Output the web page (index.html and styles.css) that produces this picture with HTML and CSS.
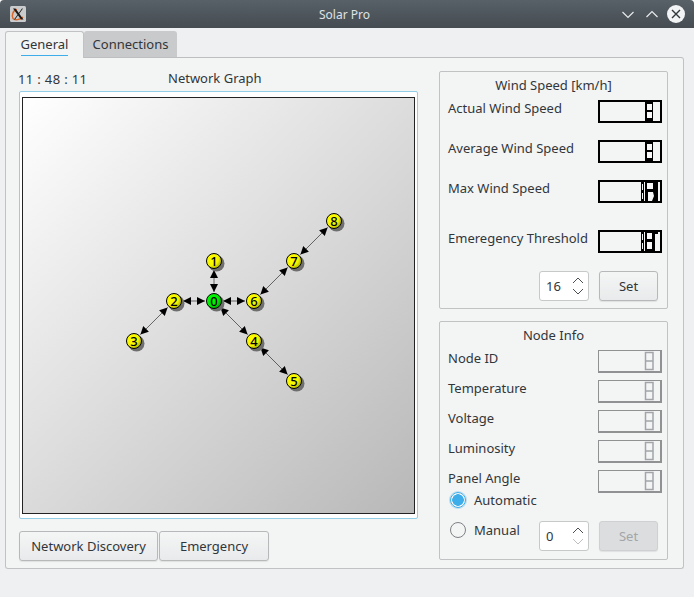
FILE: index.html
```html
<!DOCTYPE html>
<html lang="en">
<head>
  <meta charset="UTF-8">
  <title>Solar Pro</title>
  <link rel="stylesheet" href="styles.css">
</head>
<body>
  <div id="window">
    <div id="titlebar">
      <svg class="app-icon" width="16" height="16" viewBox="0 0 16 16">
        <rect x="0" y="0" width="16" height="16" rx="1.5" fill="#c9cbcc"/>
        <path d="M7 3.5C3 4 1.5 9 3 12.5C4.5 14.5 10 14 13 11" fill="none" stroke="#d9662a" stroke-width="1.4"/>
        <path d="M3 2.5L5.5 2.5L13.5 13.5L11 13.5Z M12 2.5L13 2.5L5 13.5L4 13.5Z" fill="#1b1b1b"/>
      </svg>
      <div class="title">Solar Pro</div>
      <svg class="win-buttons" width="70" height="20" viewBox="0 0 70 20">
        <path d="M0.5 8L6 13.500L11.500 8" fill="none" stroke="#e8eaeb" stroke-width="1.2"/>
        <path d="M24.500 13L30 7.500L35.500 13" fill="none" stroke="#e8eaeb" stroke-width="1.2"/>
        <circle cx="54" cy="10" r="9" fill="#f2f3f4"/>
        <path d="M50 6L58 14M58 6L50 14" fill="none" stroke="#31363b" stroke-width="1.4"/>
      </svg>
    </div>

    <div id="content">
      <div class="tabs">
        <div class="tab active"><span>General</span></div>
        <div class="tab">Connections</div>
      </div>

      <div class="pane">
        <div class="left">
          <div class="graph-head">
            <div class="clock">11 : 48 : 11</div>
            <div class="graph-title">Network Graph</div>
          </div>
          <div class="graph-frame">
            <div class="canvas">
              <svg class="graph" viewBox="23 98 391 415">
                <defs>
                  <marker id="head" markerUnits="userSpaceOnUse" markerWidth="8" markerHeight="8" refX="8" refY="4" orient="auto-start-reverse">
                    <path d="M0 0L8 4L0 8Z" fill="#000"/>
                  </marker>
                  <radialGradient id="yellow" cx="0.35" cy="0.35" r="0.8">
                    <stop offset="0" stop-color="#ffff00"/>
                    <stop offset="0.55" stop-color="#f4f400"/>
                    <stop offset="1" stop-color="#8f8f00"/>
                  </radialGradient>
                  <radialGradient id="green" cx="0.35" cy="0.35" r="0.8">
                    <stop offset="0" stop-color="#00ff00"/>
                    <stop offset="0.55" stop-color="#00ea00"/>
                    <stop offset="1" stop-color="#008a00"/>
                  </radialGradient>
                </defs>
                <g class="edges">
                  <line x1="214" y1="292" x2="214" y2="270" marker-start="url(#head)" marker-end="url(#head)"/>
                  <line x1="205" y1="301" x2="183" y2="301" marker-start="url(#head)" marker-end="url(#head)"/>
                  <line x1="223" y1="301" x2="245" y2="301" marker-start="url(#head)" marker-end="url(#head)"/>
                  <line x1="220.4" y1="307.4" x2="247.6" y2="334.6" marker-start="url(#head)" marker-end="url(#head)"/>
                  <line x1="167.6" y1="307.4" x2="140.4" y2="334.6" marker-start="url(#head)" marker-end="url(#head)"/>
                  <line x1="260.4" y1="347.4" x2="287.6" y2="374.6" marker-start="url(#head)" marker-end="url(#head)"/>
                  <line x1="260.4" y1="294.6" x2="287.6" y2="267.4" marker-start="url(#head)" marker-end="url(#head)"/>
                  <line x1="300.4" y1="254.6" x2="327.6" y2="227.4" marker-start="url(#head)" marker-end="url(#head)"/>
                </g>
                <g class="shadows">
                  <circle cx="216.5" cy="303.5" r="8"/><circle cx="216.5" cy="263.5" r="8"/>
                  <circle cx="176.5" cy="303.5" r="8"/><circle cx="136.5" cy="343.5" r="8"/>
                  <circle cx="256.5" cy="343.5" r="8"/><circle cx="296.5" cy="383.5" r="8"/>
                  <circle cx="256.5" cy="303.5" r="8"/><circle cx="296.5" cy="263.5" r="8"/>
                  <circle cx="336.5" cy="223.5" r="8"/>
                </g>
                <g class="nodes">
                  <circle cx="214" cy="301" r="7.5" fill="url(#green)"/>
                  <circle cx="214" cy="261" r="7.5" fill="url(#yellow)"/>
                  <circle cx="174" cy="301" r="7.5" fill="url(#yellow)"/>
                  <circle cx="134" cy="341" r="7.5" fill="url(#yellow)"/>
                  <circle cx="254" cy="341" r="7.5" fill="url(#yellow)"/>
                  <circle cx="294" cy="381" r="7.5" fill="url(#yellow)"/>
                  <circle cx="254" cy="301" r="7.5" fill="url(#yellow)"/>
                  <circle cx="294" cy="261" r="7.5" fill="url(#yellow)"/>
                  <circle cx="334" cy="221" r="7.5" fill="url(#yellow)"/>
                </g>
                <g class="labels">
                  <text x="214" y="306">0</text>
                  <text x="214" y="266">1</text>
                  <text x="174" y="306">2</text>
                  <text x="134" y="346">3</text>
                  <text x="254" y="346">4</text>
                  <text x="294" y="386">5</text>
                  <text x="254" y="306">6</text>
                  <text x="294" y="266">7</text>
                  <text x="334" y="226">8</text>
                </g>
              </svg>
            </div>
          </div>
          <div class="graph-buttons">
            <button class="btn discovery">Network Discovery</button>
            <button class="btn emergency">Emergency</button>
          </div>
        </div>

        <div class="right">
          <div class="group wind">
            <div class="group-title">Wind Speed [km/h]</div>
            <div class="row"><span class="label">Actual Wind Speed</span>
              <div class="lcd"><svg width="60" height="19" viewBox="0 0 60 19"><path class="seg" d="M45 0h8v19h-8z"/><path class="hole" d="M47 2h5v6h-5zM47 10h5v6h-5z"/></svg></div>
            </div>
            <div class="row"><span class="label">Average Wind Speed</span>
              <div class="lcd"><svg width="60" height="19" viewBox="0 0 60 19"><path class="seg" d="M45 0h8v19h-8z"/><path class="hole" d="M47 2h5v6h-5zM47 10h5v6h-5z"/></svg></div>
            </div>
            <div class="row"><span class="label">Max Wind Speed</span>
              <div class="lcd"><svg width="60" height="19" viewBox="0 0 60 19"><path class="seg" d="M41 0h3v19h-3zM45 0h13v19h-13z"/><path class="hole" d="M42 2h1v6h-1zM42 11h1v6h-1zM47 1h6v6h-6zM48 10h5l1 4l-2 5h-4z"/></svg></div>
            </div>
            <div class="row threshold"><span class="label">Emeregency Threshold</span>
              <div class="lcd"><svg width="60" height="19" viewBox="0 0 60 19"><path class="seg" d="M41 0h3v19h-3zM45 0h13v2h-3v17h-10z"/><path class="hole" d="M42 2h1v6h-1zM42 11h1v6h-1zM47 1h5v6h-5zM47 10h5v7h-5z"/></svg></div>
            </div>
            <div class="controls">
              <div class="spin"><span>16</span>
                <svg width="14" height="24" viewBox="0 0 14 24"><path d="M2 9L7 4L12 9" /><path d="M2 15L7 20L12 15"/></svg>
              </div>
              <button class="btn set">Set</button>
            </div>
          </div>

          <div class="group info">
            <div class="group-title">Node Info</div>
            <div class="row"><span class="label">Node ID</span><div class="lcd dim"><svg width="61" height="20" viewBox="0 0 61 20"><path class="dim-seg" d="M46.500 1.500h7.500v17h-7.500zM46.500 10h7.500"/></svg></div></div>
            <div class="row"><span class="label">Temperature</span><div class="lcd dim"><svg width="61" height="20" viewBox="0 0 61 20"><path class="dim-seg" d="M46.500 1.500h7.500v17h-7.500zM46.500 10h7.500"/></svg></div></div>
            <div class="row"><span class="label">Voltage</span><div class="lcd dim"><svg width="61" height="20" viewBox="0 0 61 20"><path class="dim-seg" d="M46.500 1.500h7.500v17h-7.500zM46.500 10h7.500"/></svg></div></div>
            <div class="row"><span class="label">Luminosity</span><div class="lcd dim"><svg width="61" height="20" viewBox="0 0 61 20"><path class="dim-seg" d="M46.500 1.500h7.500v17h-7.500zM46.500 10h7.500"/></svg></div></div>
            <div class="row"><span class="label">Panel Angle</span><div class="lcd dim"><svg width="61" height="20" viewBox="0 0 61 20"><path class="dim-seg" d="M46.500 1.500h7.500v17h-7.500zM46.500 10h7.500"/></svg></div></div>
            <div class="radio-row"><span class="radio on"></span><span>Automatic</span></div>
            <div class="manual-row">
              <div class="radio-row manual"><span class="radio"></span><span>Manual</span></div>
              <div class="spin"><span>0</span>
                <svg width="14" height="24" viewBox="0 0 14 24"><path d="M2 9L7 4L12 9" /><path class="off" d="M2 15L7 20L12 15"/></svg>
              </div>
              <button class="btn set" disabled>Set</button>
            </div>
          </div>
        </div>
      </div>
    </div>
  </div>
</body>
</html>
```

FILE: styles.css
```css
html, body {
  margin: 0;
  padding: 0;
  height: 100%;
  overflow: hidden;
}
body {
  font-family: 'Noto Sans', Arial, sans-serif;
  font-size: 13px;
  color: #31363b;
}
#window {
  width: 694px;
  height: 597px;
  background: #eff0f1;
  border-radius: 4px 4px 0 0;
  overflow: hidden;
}
#titlebar {
  height: 28px;
  background: linear-gradient(#586168, #454c52);
  display: flex;
  align-items: center;
  padding-left: 10px;
  box-sizing: border-box;
}
.app-icon {
  display: block;
}
.title {
  flex: 1;
  text-align: center;
  color: #dfe2e4;
  font-size: 12px;
  padding-left: 41px;
}
.win-buttons {
  display: block;
  margin-right: 2px;
}

#content {
  padding: 3px 10px 0 5px;
}
.tabs {
  display: flex;
  height: 27px;
  position: relative;
  z-index: 1;
}
.tab {
  width: 93px;
  box-sizing: border-box;
  background: #c9cacb;
  border-radius: 3px 3px 0 0;
  text-align: center;
  line-height: 27px;
  border-bottom: 1px solid #bcbebf;
}
.tab.active {
  width: 79px;
  background: #f3f4f4;
  border: 1px solid #c0c2c3;
  border-bottom: 0;
  line-height: 25px;
}
.tab.active span {
  display: inline-block;
  height: 23px;
  border-bottom: 1px solid #3daee9;
}
.pane {
  height: 512px;
  box-sizing: border-box;
  background: #f3f4f4;
  border: 1px solid #c0c2c3;
  border-top: 1px solid #bcbebf;
  border-radius: 0 3px 3px 3px;
  margin-top: -1px;
  padding: 13px 15px 0 13px;
  display: flex;
  gap: 21px;
}

.left {
  width: 399px;
}
.graph-head {
  display: grid;
  grid-template-columns: 149px auto;
  height: 20px;
  line-height: 17px;
}
.clock {
  margin-left: -1px;
  letter-spacing: 0.35px;
}
.graph-title {
  margin-top: -1px;
}
.graph-frame {
  height: 428px;
  box-sizing: border-box;
  background: #fff;
  border: 1px solid #93cee9;
  border-radius: 2px;
  padding: 5px 2px 4px;
}
.canvas {
  height: 417px;
  box-sizing: border-box;
  border: 1px solid #232323;
  background: linear-gradient(135deg, #ffffff, #b8b8b8);
}
.graph {
  display: block;
  width: 391px;
  height: 415px;
}
.edges line {
  stroke: #000;
  stroke-width: 1;
  stroke-opacity: 0.55;
}
.shadows circle {
  fill: #6e6e6e;
}
.nodes circle {
  stroke: #000;
  stroke-width: 1;
}
.labels text {
  font-family: 'Noto Sans', Arial, sans-serif;
  font-size: 13px;
  font-weight: 500;
  text-anchor: middle;
  fill: #000;
}
.graph-buttons {
  display: flex;
  gap: 1px;
  margin-top: 12px;
}

.btn {
  font-family: 'Noto Sans', Arial, sans-serif;
  font-size: 13px;
  color: #31363b;
  height: 30px;
  padding: 0;
  border: 1px solid #b6b8b9;
  border-radius: 3px;
  background: linear-gradient(#f4f5f5, #e9eaeb);
  box-shadow: 0 1px 1px rgba(0, 0, 0, 0.08);
}
.discovery {
  width: 139px;
}
.emergency {
  width: 110px;
}
.set {
  width: 59px;
}
.set:disabled {
  color: #a3a6a8;
  background: #dcddde;
  border-color: #cfd0d1;
}

.right {
  width: 229px;
}
.group {
  box-sizing: border-box;
  border: 1px solid #c0c2c3;
  border-radius: 2px;
  padding: 0 5px 0 8px;
}
.wind {
  height: 238px;
}
.info {
  height: 239px;
  margin-top: 12px;
}
.group-title {
  text-align: center;
  height: 28px;
  line-height: 26px;
  margin-right: 3px;
}
.row {
  display: flex;
  justify-content: space-between;
  height: 23px;
  margin-bottom: 17px;
}
.label {
  line-height: 16px;
}
.threshold {
  margin-top: 27px;
  margin-bottom: 18px;
}
.lcd {
  width: 64px;
  height: 23px;
  box-sizing: border-box;
  border: 2px solid #000;
  background: #f3f4f4;
}
.lcd svg {
  display: block;
}
.seg {
  fill: #000;
}
.hole {
  fill: #f8f8f8;
}
.lcd.dim {
  border: 1px solid #8f9193;
  border-right-width: 2px;
  border-bottom-width: 2px;
}
.dim-seg {
  fill: none;
  stroke: #a2a5a8;
  stroke-width: 1.500;
}
.info .row {
  margin-bottom: 7px;
}
.controls {
  display: flex;
  justify-content: flex-end;
  gap: 10px;
  padding-right: 4px;
}
.spin {
  width: 50px;
  height: 30px;
  box-sizing: border-box;
  background: #fff;
  border: 1px solid #c6c8c9;
  border-radius: 3px;
  display: flex;
  align-items: center;
  justify-content: space-between;
  padding: 0 3px 0 6px;
}
.spin svg {
  display: block;
}
.spin path {
  fill: none;
  stroke: #4b5055;
  stroke-width: 1;
}
.spin path.off {
  stroke: #bdbfc1;
}
.radio-row {
  display: flex;
  align-items: center;
  gap: 8px;
  height: 16px;
  line-height: 16px;
  margin-top: -8px;
  margin-left: 2px;
}
.radio {
  width: 16px;
  height: 16px;
  box-sizing: border-box;
  border: 1px solid #7f8285;
  border-radius: 50%;
  background: #f3f4f4;
}
.radio.on {
  border: 1px solid #3daee9;
  background: radial-gradient(circle, #3daee9 0, #3daee9 5.500px, #f3f4f4 6px);
  box-shadow: 0 0 0 1px rgba(61, 174, 233, 0.3);
}
.manual-row {
  display: flex;
  margin-top: 13px;
  padding-right: 4px;
  gap: 10px;
}
.manual {
  margin: 0 0 0 2px;
  flex: 1;
  height: 18px;
}
```
